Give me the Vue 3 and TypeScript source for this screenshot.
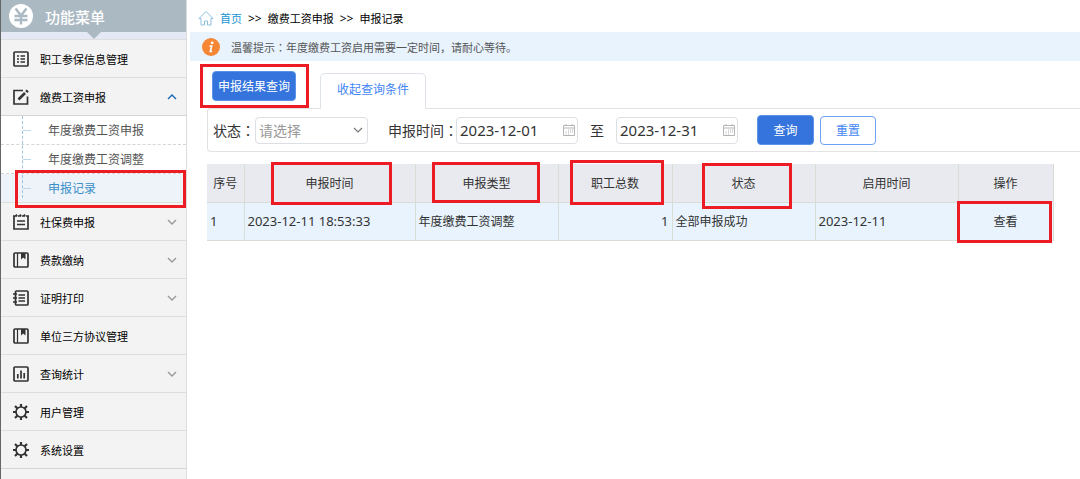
<script setup lang="ts">
import { ref } from 'vue'

interface MenuItem {
  label: string
  icon: string
  arrow?: 'up' | 'down'
  children?: string[]
}

const menu: MenuItem[] = [
  { label: '职工参保信息管理', icon: 'list' },
  { label: '缴费工资申报', icon: 'edit', arrow: 'up', children: ['年度缴费工资申报', '年度缴费工资调整', '申报记录'] },
  { label: '社保费申报', icon: 'note', arrow: 'down' },
  { label: '费款缴纳', icon: 'book', arrow: 'down' },
  { label: '证明打印', icon: 'contacts', arrow: 'down' },
  { label: '单位三方协议管理', icon: 'book' },
  { label: '查询统计', icon: 'chart', arrow: 'down' },
  { label: '用户管理', icon: 'gear' },
  { label: '系统设置', icon: 'gear' },
]

const active = ref('申报记录')
const status = ref('')
const from = ref('2023-12-01')
const to = ref('2023-12-31')

const rows = [
  { no: 1, time: '2023-12-11 18:53:33', type: '年度缴费工资调整', total: 1, status: '全部申报成功', start: '2023-12-11' },
]
</script>

<template>
  <div class="page">
    <aside class="sidebar">
      <header class="brand">
        <svg class="coin" viewBox="0 0 24 24" aria-hidden="true">
          <circle cx="12" cy="12" r="12" fill="#fff" />
          <path d="M6.500 4.500l5.500 7 5.500-7M12 12v8.500M5.500 12h13M5.500 16h13" fill="none" stroke="#abb9c3" stroke-width="2.4" />
        </svg>
        <span>功能菜单</span>
      </header>
      <nav>
        <template v-for="item in menu" :key="item.label">
          <button class="item" type="button">
            <svg class="icon" viewBox="0 0 16 16" aria-hidden="true">
              <g v-if="item.icon === 'list'">
                <rect x="1" y="1" width="14" height="14" rx="1" />
                <path d="M4 5h2M4 8h2M4 11h2M7.500 5H12M7.500 8H12M7.500 11H12" />
              </g>
              <g v-else-if="item.icon === 'edit'">
                <path d="M10 1.500H1v13.500h13.500V7.500" />
                <path d="M5.500 10.500L12 4" stroke-width="2.600" />
                <path d="M13 1.200l2 2" stroke-width="2.200" />
              </g>
              <g v-else-if="item.icon === 'note'">
                <path d="M1 2.500V15h14V2.500M0 2h3M5 2h2M9 2h2M13 2h3M3 .500l1 2M7 .500l1 2M11 .500l1 2" />
                <path d="M4 7h8M4 10.500h8" stroke-width="1.300" />
              </g>
              <g v-else-if="item.icon === 'book'">
                <rect x="1" y="1" width="14" height="14" rx="1" />
                <path d="M4.500 1v14" stroke-width="1.200" />
                <path d="M8 1h4.500v6.500l-2.250-2L8 7.500z" fill="#333" stroke="none" />
              </g>
              <g v-else-if="item.icon === 'contacts'">
                <rect x="2.500" y="1" width="12.500" height="14" rx="1" />
                <path d="M5.500 5h6.500M5.500 8h6.500M5.500 11h6.500M0 4h4M0 8h4M0 12h4" />
              </g>
              <g v-else-if="item.icon === 'chart'">
                <rect x="1" y="1" width="14" height="14" rx="1" />
                <path d="M4.800 8v4.500M8 4.500v8M11.200 7v5.500" stroke-width="1.700" />
              </g>
              <g v-else>
                <circle cx="8" cy="8" r="5" />
                <path d="M8 0v3M8 13v3M0 8h3M13 8h3M2 2l2.500 2.500M11.500 11.500L14 14M2 14l2.500-2.500M11.500 4.500L14 2" stroke-width="2.200" />
              </g>
            </svg>
            <span class="label">{{ item.label }}</span>
            <svg v-if="item.arrow" class="arrow" :class="item.arrow" viewBox="0 0 10 6" aria-hidden="true">
              <path d="M1 1l4 4 4-4" />
            </svg>
          </button>
          <ul v-if="item.children" class="sub">
            <li v-for="child in item.children" :key="child" :class="{ current: child === active }">
              <a href="#" @click.prevent="active = child">{{ child }}</a>
              <i v-if="child === '申报记录'" class="mark mark-menu"></i>
            </li>
          </ul>
        </template>
      </nav>
    </aside>

    <main class="content">
      <div class="crumbs">
        <svg class="home" viewBox="0 0 16 16" aria-hidden="true">
          <path d="M1 8.500L8 1.500l7 7h-2V15H9.500v-4h-3v4H3V8.500z" fill="none" stroke="#8cc0df" />
        </svg>
        <a href="#">首页</a>
        <span class="sep">&gt;&gt;</span>
        <span>缴费工资申报</span>
        <span class="sep">&gt;&gt;</span>
        <span>申报记录</span>
      </div>

      <div class="tip">
        <svg class="info" viewBox="0 0 18 18" aria-hidden="true">
          <circle cx="9" cy="9" r="9" fill="#f58634" />
          <circle cx="10.200" cy="4.800" r="1.400" fill="#fff" />
          <path d="M7.500 8h2.200l-1.400 5.500h1.800" fill="none" stroke="#fff" stroke-width="1.600" />
        </svg>
        <span>温馨提示<span class="colon">：</span>年度缴费工资启用需要一定时间，请耐心等待。</span>
      </div>

      <div class="tabs">
        <div class="anchor">
          <button class="primary tab-main" type="button">申报结果查询</button>
          <i class="mark mark-tab"></i>
        </div>
        <button class="tab" type="button">收起查询条件</button>
      </div>

      <form class="query" @submit.prevent>
        <label for="status">状态<span class="colon">：</span></label>
        <div class="field select">
          <select id="status" v-model="status">
            <option value="">请选择</option>
            <option value="ok">全部申报成功</option>
          </select>
          <svg class="caret" viewBox="0 0 10 6" aria-hidden="true"><path d="M1 1l4 4 4-4" /></svg>
        </div>
        <label for="from">申报时间<span class="colon narrow">：</span></label>
        <div class="field date">
          <input id="from" v-model="from" type="text" />
          <svg class="cal" viewBox="0 0 12 12" aria-hidden="true">
            <path d="M.5 1.500h11v10H.5zM.5 4h11M3 0v2M9 0v2" />
            <path d="M5 6h1M7 6h1M9 6h1M2.500 8h1M5 8h1M7 8h1M9 8h1M2.500 10h1M5 10h1" />
          </svg>
        </div>
        <label class="until" for="to">至</label>
        <div class="field date">
          <input id="to" v-model="to" type="text" />
          <svg class="cal" viewBox="0 0 12 12" aria-hidden="true">
            <path d="M.5 1.500h11v10H.5zM.5 4h11M3 0v2M9 0v2" />
            <path d="M5 6h1M7 6h1M9 6h1M2.500 8h1M5 8h1M7 8h1M9 8h1M2.500 10h1M5 10h1" />
          </svg>
        </div>
        <button class="primary search" type="submit">查询</button>
        <button class="reset" type="reset">重置</button>
      </form>

      <table class="grid">
        <colgroup>
          <col class="c-no" /><col class="c-time" /><col class="c-type" /><col class="c-total" />
          <col class="c-status" /><col class="c-start" /><col class="c-op" />
        </colgroup>
        <thead>
          <tr>
            <th>序号</th>
            <th>申报时间<i class="mark mark-time"></i></th>
            <th>申报类型<i class="mark mark-type"></i></th>
            <th>职工总数<i class="mark mark-total"></i></th>
            <th>状态<i class="mark mark-status"></i></th>
            <th>启用时间</th>
            <th>操作</th>
          </tr>
        </thead>
        <tbody>
          <tr v-for="row in rows" :key="row.no">
            <td class="latin">{{ row.no }}</td>
            <td class="latin">{{ row.time }}</td>
            <td>{{ row.type }}</td>
            <td class="latin num">{{ row.total }}</td>
            <td>{{ row.status }}</td>
            <td class="latin">{{ row.start }}</td>
            <td class="op"><a href="#" @click.prevent>查看</a><i class="mark mark-view"></i></td>
          </tr>
        </tbody>
      </table>
    </main>
  </div>
</template>

<style>
body {
  margin: 0;
  background: #fff;
}
</style>

<style scoped>
.page {
  display: flex;
  min-height: 100vh;
  font-family: "Noto Sans", "Noto Sans CJK SC", sans-serif;
  font-size: 12px;
  color: #333;
}
.page * {
  box-sizing: border-box;
}
button,
input,
select {
  font-family: inherit;
  margin: 0;
}
button {
  cursor: pointer;
}
a {
  color: inherit;
  text-decoration: none;
}
.colon {
  font-family: "Noto Sans CJK TC", sans-serif;
  line-height: 1;
}
.colon.narrow {
  display: inline-block;
  width: 12px;
}
.mark {
  position: absolute;
  z-index: 2;
  border: 3px solid #ed1c24;
  pointer-events: none;
}

.sidebar {
  flex: 0 0 187px;
  border-left: 1px solid #666;
  border-right: 1px solid #dcdcdc;
  background: #f3f3f3;
}
.brand {
  position: relative;
  display: flex;
  align-items: center;
  gap: 12px;
  height: 32px;
  padding-left: 8px;
  background: #abb9c3;
  color: #fff;
  font-size: 15px;
  font-weight: 500;
}
.brand::after {
  content: "";
  position: absolute;
  left: 50%;
  top: 100%;
  margin-left: -7px;
  border: 7px solid transparent;
  border-top-color: #abb9c3;
  border-bottom: 0;
}
.coin {
  width: 24px;
  height: 24px;
}
nav {
  border-top: 7px solid #e4e9f5;
}
.item {
  display: flex;
  align-items: center;
  width: 100%;
  height: 38px;
  padding: 0 9px 0 12px;
  border: 0;
  border-top: 1px solid #dedede;
  background: #f3f3f3;
  color: #000;
  font-size: 11px;
  text-align: left;
}
nav > .item:last-child {
  height: 39px;
  border-bottom: 1px solid #d5d5d5;
}
.icon {
  width: 16px;
  height: 16px;
  margin-right: 11px;
  fill: none;
  stroke: #333;
  stroke-width: 1.7;
}
.label {
  flex: 1;
}
.arrow {
  width: 10px;
  height: 6px;
  fill: none;
  stroke: #999;
  stroke-width: 1.4;
}
.arrow.up {
  transform: rotate(180deg);
  stroke: #1767b5;
}
.sub {
  position: relative;
  margin: 0;
  padding: 0;
  list-style: none;
  border-top: 1px solid #d5d5d5;
  background: #fff;
}
.sub::before {
  content: "";
  position: absolute;
  z-index: 1;
  left: 21px;
  top: 0;
  bottom: 4px;
  border-left: 1px dashed #9cc6e2;
}
.sub li {
  position: relative;
  height: 29px;
  border-bottom: 1px dashed #d5d5d5;
}
.sub li:last-child {
  height: 28px;
  border-bottom: 0;
}
.sub li::before {
  content: "";
  position: absolute;
  left: 22px;
  top: 50%;
  width: 8px;
  border-top: 1px solid #bcd8ea;
}
.sub a {
  display: block;
  padding-left: 47px;
  line-height: 29px;
  color: #555;
}
.sub .current {
  background: #edf3f9;
}
.sub .current a {
  color: #3b8fc8;
}
.mark-menu {
  inset: -4px 0 -6px 14px;
}

.content {
  flex: 1;
  min-width: 0;
  padding-left: 3px;
}
.crumbs {
  display: flex;
  align-items: center;
  gap: 6px;
  height: 32px;
  padding: 4px 0 0 8px;
  font-size: 11px;
  color: #000;
}
.crumbs a {
  color: #1c94d2;
}
.sep {
  font-size: 12px;
}
.home {
  width: 16px;
  height: 16px;
}
.tip {
  display: flex;
  align-items: center;
  gap: 11px;
  height: 29px;
  padding-left: 12px;
  background: #e8f3fe;
  font-size: 11px;
  color: #555;
}
.info {
  width: 18px;
  height: 18px;
}
.tabs {
  display: flex;
  align-items: flex-end;
  height: 47px;
  padding-left: 22px;
}
.anchor {
  position: relative;
  margin-bottom: 7px;
}
.primary {
  border: 1px solid #5b93ea;
  border-radius: 4px;
  background: #3474dc;
  color: #fff;
  padding: 0;
  font-size: 12px;
}
.tab-main {
  display: block;
  width: 84px;
  height: 30px;
}
.mark-tab {
  inset: -7px -13px -7px -12px;
}
.tab {
  position: relative;
  z-index: 1;
  width: 106px;
  height: 36px;
  margin: 0 0 -1px 24px;
  padding: 0 0 6px;
  border: 1px solid #dfe3ea;
  border-bottom: 0;
  border-radius: 5px 5px 0 0;
  background: #fff;
  color: #4285f4;
  font-size: 12px;
}
.query {
  display: flex;
  align-items: center;
  height: 44px;
  margin-left: 17px;
  padding-left: 5px;
  border: 1px solid #e2e2e2;
  border-right: 0;
  border-radius: 4px 0 0 4px;
  font-size: 14px;
}
.field {
  position: relative;
  height: 27px;
}
.field input,
.field select {
  width: 100%;
  height: 100%;
  padding: 0 3px;
  border: 1px solid #dcdfe4;
  border-radius: 4px;
  background: #fff;
  color: #333;
  font-size: 15px;
  outline: 0;
}
.field select {
  appearance: none;
  color: #999;
  font-size: 14px;
}
.select {
  width: 113px;
  margin-right: 20px;
}
.date {
  width: 122px;
}
.caret {
  position: absolute;
  right: 5px;
  top: 10px;
  width: 10px;
  height: 6px;
  fill: none;
  stroke: #777;
  stroke-width: 1.2;
  pointer-events: none;
}
.cal {
  position: absolute;
  right: 3px;
  top: 7px;
  width: 12px;
  height: 12px;
  fill: none;
  stroke: #b5b5b5;
}
.until {
  width: 38px;
  text-align: center;
}
.search {
  width: 57px;
  height: 30px;
  margin: 0 6px 0 19px;
}
.reset {
  width: 56px;
  height: 29px;
  padding: 0;
  border: 1px solid #6ca0f2;
  border-radius: 4px;
  background: #fff;
  color: #4285f4;
  font-size: 12px;
}

.grid {
  width: calc(100% - 44px);
  margin: 12px 0 0 17px;
  border-collapse: collapse;
  table-layout: fixed;
  font-size: 12px;
}
.c-no { width: 37px; }
.c-time { width: 171px; }
.c-type { width: 143px; }
.c-total { width: 114px; }
.c-status { width: 143px; }
.c-start { width: 143px; }
.c-op { width: 95px; }
.grid th,
.grid td {
  position: relative;
  height: 38px;
  padding: 0 3px;
  border-right: 1px solid #d8ddd6;
  border-bottom: 1px solid #d8ddd6;
  white-space: nowrap;
}
.grid th {
  background: #e8eaef;
  font-weight: 400;
  text-align: center;
}
.grid td {
  background: #e8f3fe;
  text-align: left;
}
.grid .latin {
  font-size: 13px;
}
.grid .num {
  text-align: right;
}
.grid .op {
  text-align: center;
}
.mark-time { inset: -2px 23px -3px 26px; }
.mark-type { inset: -2px 18px -1px 16px; }
.mark-total { inset: -4px 8px -3px 11px; }
.mark-status { inset: -1px 23px -7px 29px; }
.mark-view { inset: -2px 1px -3px -2px; }
</style>
